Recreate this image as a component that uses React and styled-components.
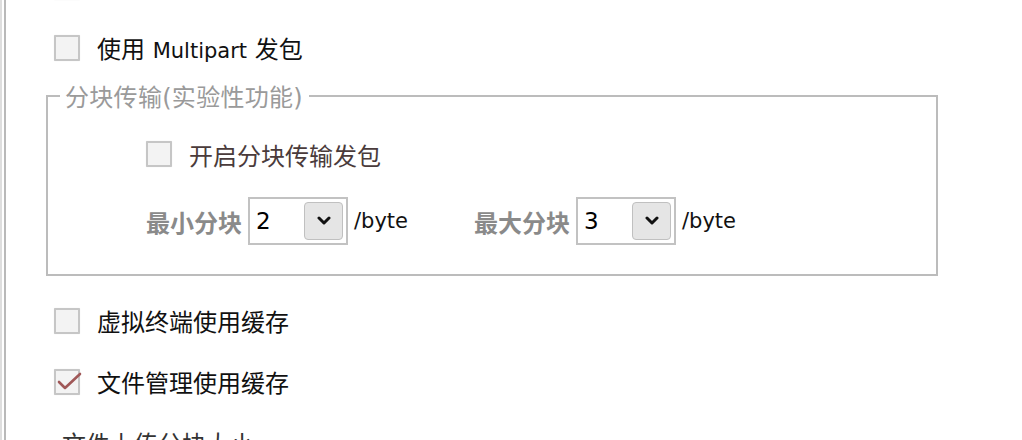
import React from "react";
import styled, { createGlobalStyle } from "styled-components";

const GlobalStyle = createGlobalStyle`
  html {
    margin: 0;
    padding: 0;
    overflow: hidden;
    /* the two panel rules on the left edge run the whole height of the window */
    background: linear-gradient(
      to right,
      #dedede 0 2px,
      #fff 2px 4px,
      #b9b9b9 4px 6px,
      #fff 6px
    );
  }
  body {
    margin: 0;
    padding: 0;
    font-family: "DejaVu Sans", "Noto Sans CJK SC", sans-serif;
    font-size: 24px;
    color: #111;
  }
`;

const Frame = styled.div`
  display: flex;
  height: 440px;
  padding-left: 6px;
  overflow: hidden;
`;

const Panel = styled.div`
  flex: 1;
  display: flex;
  flex-direction: column;
  overflow: hidden;
`;

const Content = styled.div`
  flex: none;
  margin-top: -44px;
  padding-left: 48px;
  display: flex;
  flex-direction: column;
`;

const CheckRow = styled.label`
  height: ${({ $h }) => $h || 61}px;
  display: flex;
  align-items: center;
  gap: 17px;
  color: ${({ $tone }) => $tone || "#111"};
  margin-left: ${({ $indent }) => $indent || 0}px;
`;

const Latin = styled.span`
  font-size: 21px;
`;

const Box = styled.span`
  position: relative;
  width: 22px;
  height: 22px;
  flex: none;
  border: 2px solid #c6c6c6;
  border-radius: 1px;
  background: #f3f3f3;
  box-shadow: 0 0 1px rgba(0, 0, 0, 0.15);

  svg {
    position: absolute;
    left: -1px;
    top: -3px;
  }
`;

const Fieldset = styled.fieldset`
  margin: 0 0 14px -8px;
  width: 892px;
  height: 198px;
  border: 2px solid #bcbcbc;
  padding: 0;
  box-sizing: border-box;
`;

const Legend = styled.legend`
  color: #9a9a9a;
  padding: 0 6px 0 5px;
  margin-left: 12px;
  letter-spacing: 0.3px;
`;

const Inner = styled.div`
  display: flex;
  flex-direction: column;
  padding-left: 98px;
  margin-top: 27px;
`;

const SizeRow = styled.div`
  display: flex;
  align-items: center;
  height: 48px;
  margin-top: 29px;
  gap: 66px;
`;

const SizeField = styled.div`
  display: flex;
  align-items: center;
  gap: 6px;
`;

const FieldLabel = styled.span`
  color: #8a8a8a;
  font-weight: bold;
`;

const Select = styled.div`
  width: 100px;
  height: 48px;
  box-sizing: border-box;
  border: 2px solid #c2c2c2;
  display: flex;
  align-items: center;
  justify-content: space-between;
  padding: 0 3px 0 6px;
  font-size: 23px;
  color: #000;
`;

const DropButton = styled.span`
  width: 39px;
  height: 38px;
  box-sizing: border-box;
  border: 1px solid #c0c0c0;
  border-radius: 4px;
  background: #e5e5e5;
  display: flex;
  align-items: center;
  justify-content: center;
`;

const Unit = styled.span`
  color: #111;
  font-size: 21px;
`;

function Checkbox({ checked }) {
  return (
    <Box>
      {checked && (
        <svg width="28" height="28" viewBox="0 0 28 28">
          <polyline
            points="4,14 10,20 25,6"
            fill="none"
            stroke="#a05858"
            strokeWidth="2.6"
            strokeLinecap="round"
            strokeLinejoin="round"
          />
        </svg>
      )}
    </Box>
  );
}

function Chevron() {
  return (
    <svg width="14" height="10" viewBox="0 0 14 10">
      <polyline
        points="2,2 7,7 12,2"
        fill="none"
        stroke="#111"
        strokeWidth="3"
        strokeLinecap="round"
        strokeLinejoin="round"
      />
    </svg>
  );
}

function ChunkSelect({ label, value }) {
  return (
    <SizeField>
      <FieldLabel>{label}</FieldLabel>
      <Select>
        <span>{value}</span>
        <DropButton>
          <Chevron />
        </DropButton>
      </Select>
      <Unit>/byte</Unit>
    </SizeField>
  );
}

export default function App() {
  return (
    <>
      <GlobalStyle />
      <Frame>
        <Panel>
          <Content>
            <CheckRow $tone="#333">
              <Checkbox />
              启用增量同步传输数据
            </CheckRow>
            <CheckRow>
              <Checkbox />
              <span>
                使用 <Latin>Multipart</Latin> 发包
              </span>
            </CheckRow>
            <Fieldset>
              <Legend>分块传输(实验性功能)</Legend>
              <Inner>
                <CheckRow $tone="#4a3b3b" $h={28}>
                  <Checkbox />
                  开启分块传输发包
                </CheckRow>
                <SizeRow>
                  <ChunkSelect label="最小分块" value="2" />
                  <ChunkSelect label="最大分块" value="3" />
                </SizeRow>
              </Inner>
            </Fieldset>
            <CheckRow>
              <Checkbox />
              虚拟终端使用缓存
            </CheckRow>
            <CheckRow>
              <Checkbox checked />
              文件管理使用缓存
            </CheckRow>
            <CheckRow $indent={8} $tone="#333">文件上传分块大小</CheckRow>
          </Content>
        </Panel>
      </Frame>
    </>
  );
}
